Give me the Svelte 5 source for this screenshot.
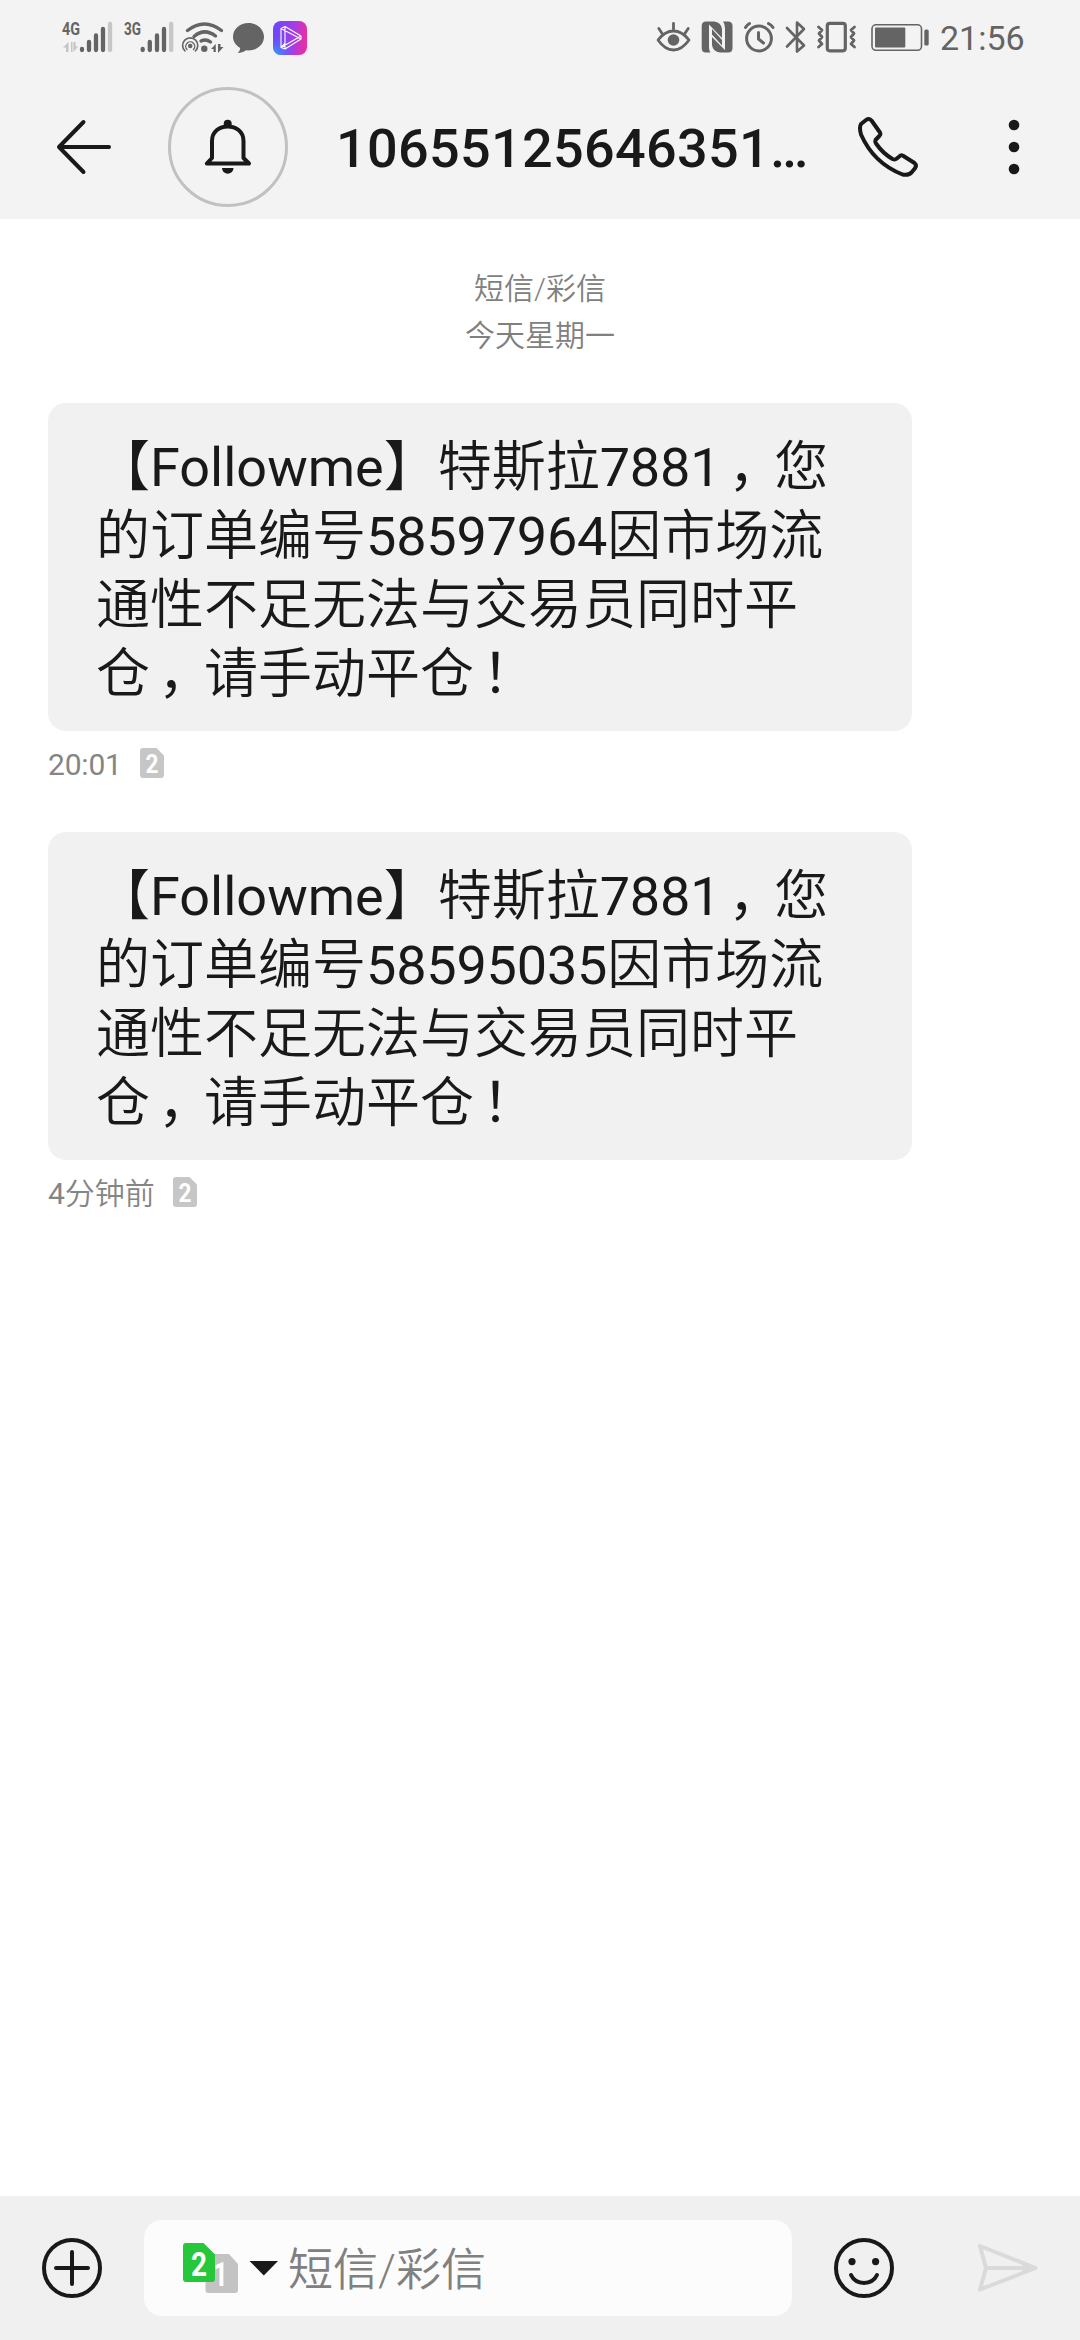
<script>
  const messages = [
    {
      lines: ['【Followme】特斯拉7881\uFF0C您', '的订单编号58597964因市场流', '通性不足无法与交易员同时平', '仓\uFF0C请手动平仓\uFF01'],
      time: '20:01',
    },
    {
      lines: ['【Followme】特斯拉7881\uFF0C您', '的订单编号58595035因市场流', '通性不足无法与交易员同时平', '仓\uFF0C请手动平仓\uFF01'],
      time: '4分钟前',
    },
  ];
  // Splits a line into Chinese, Latin and full-width punctuation runs.
  const split = (line) =>
    line
      .split(/([\uFF0C\uFF01]|[A-Za-z]+|[0-9:]+)/)
      .filter(Boolean)
      .map((text) => ({
        text,
        kind: /[\uFF0C\uFF01]/.test(text) ? 'mark' : /[0-9]/.test(text) ? 'digits' : /[A-Za-z]/.test(text) ? 'latin' : 'han',
      }));
</script>

{#snippet runs(line)}{#each split(line) as run}<span class={run.kind}>{run.text}</span>{/each}{/snippet}

<div class="screen">
  <div class="status">
    <div class="group">
      <svg width="62" height="36" viewBox="62 20 62 36">
        <text class="net" x="62" y="35.2" textLength="18" lengthAdjust="spacingAndGlyphs">4G</text>
        <path d="M68.500 52V42L63 47.500H66V52ZM71 42V52H72.500V42ZM73.500 42V52L78 46.500H75.500V42Z" fill="#c4c4c4" />
        <path d="M82 49v1M89 42v8M96 35.500v14.500M103 29v21" class="bar" />
        <path d="M110 24v26" class="bar off" />
      </svg>
      <svg width="58" height="36" viewBox="124 20 58 36">
        <text class="net" x="124" y="35.2" textLength="17" lengthAdjust="spacingAndGlyphs">3G</text>
        <path d="M142.700 49v1M149.800 42v8M157 35.500v14.500M164 29v21" class="bar" />
        <path d="M171.200 24v26" class="bar off" />
      </svg>
      <svg width="51" height="36" viewBox="182 20 51 36">
        <g fill="none" stroke="#646464" stroke-linecap="round">
          <path d="M187.500 30.500Q204.500 17.500 221.500 30.500M194 36.500Q204.500 27.500 215.500 36M201 41Q206 38.500 210.500 42" stroke-width="3.400" />
          <path d="M185 51a7.600 7.600 0 1 1 10.400 0" stroke-width="1.600" />
          <path d="M187 49.500a4.500 4.500 0 1 1 6.500 0" stroke-width="1.400" />
        </g>
        <circle cx="190.200" cy="46" r="2.300" fill="#646464" />
        <circle cx="204.300" cy="48.700" r="3.200" fill="#646464" />
        <path d="M215.800 52V44L211 49H213.500V52ZM218 44H220.500V47H223.500L218 53Z" fill="#646464" />
      </svg>
      <svg width="40" height="36" viewBox="233 20 40 36">
        <path d="M248.500 23C257 23 264 29 264 36.800S257 50.500 248.500 50.500L246 50.300C243.500 52 240.500 53 237.800 53C239.300 51.500 240 50 240.200 48C235.800 45.500 233 41.500 233 36.800C233 29 240 23 248.500 23Z" fill="#646464" />
      </svg>
      <svg width="34" height="36" viewBox="273 20 34 36">
        <defs>
          <linearGradient id="tile-base" x1="0" y1="0.400" x2="1" y2="0.500">
            <stop offset="0.100" stop-color="#7045fb" />
            <stop offset="0.600" stop-color="#a63de6" />
            <stop offset="1" stop-color="#ee2d9c" />
          </linearGradient>
          <radialGradient id="tile-glow" cx="0.050" cy="1" r="0.600">
            <stop offset="0" stop-color="#28a8ff" />
            <stop offset="1" stop-color="#5a60ff" stop-opacity="0" />
          </radialGradient>
        </defs>
        <rect x="273" y="21" width="34" height="34" rx="8" fill="url(#tile-base)" />
        <rect x="273" y="21" width="34" height="34" rx="8" fill="url(#tile-glow)" />
        <path d="M281 28.500L285 26.500L301 36V39L285 49L281 47.500ZM281 28.500L301 39M281 47.500L301 36M285 26.500V49M281 47.500L285 43" fill="none" stroke="#fff" stroke-width="1.100" stroke-linejoin="round" />
      </svg>
    </div>
    <div class="group">
      <svg width="45" height="36" viewBox="656 20 45 36">
        <path d="M658 40Q665 31 673.500 31T689 40Q682 50 673.500 50T658 40ZM673.500 23.500V30M658.800 28.500L662.500 34M688.200 28.500L684.500 34" class="line" stroke-width="2.800" />
        <circle cx="673.500" cy="40" r="5.800" fill="#646464" />
      </svg>
      <svg width="43" height="36" viewBox="701 20 43 36">
        <path d="M706 21.500H714Q721 22 722 29V38L709 24.500V46Q709 51 710.500 52.500H706Q701.700 52.500 701.700 48V26Q701.700 21.500 706 21.500Z" fill="#646464" />
        <path d="M723 21.500H728Q732.500 21.500 732.500 26V48Q732.500 52.500 728 52.500H720Q713 52 712 45V37L725 50V28Q725 24 723 21.500Z" fill="#646464" />
        <path d="M712 29L722 40V45.500L712 34.500Z" fill="#646464" />
      </svg>
      <svg width="42" height="36" viewBox="744 20 42 36">
        <circle cx="759" cy="38.500" r="12.400" class="line" stroke-width="3" />
        <path d="M745.500 27.500Q747 25 749.500 23.500M768.500 23.500Q771.500 25 773 27.500M758.500 32.500V39L763.500 43" class="line" stroke-width="3" />
      </svg>
      <svg width="31" height="36" viewBox="786 20 31 36">
        <path d="M787 28L804 45.500L797 51.500V22.500L804 29L787 46.500" class="line" stroke-width="2.600" />
      </svg>
      <svg width="55" height="36" viewBox="817 20 55 36">
        <rect x="827.300" y="23.300" width="18" height="27.500" rx="2.500" class="line" stroke-width="3.200" />
        <path d="M818.500 27L822 30L819 33.500L822 37L819 40.500L822 44L818.500 47M854.500 27L851 30L854 33.500L851 37L854 40.500L851 44L854.500 47" class="line" stroke-width="2.800" />
      </svg>
      <svg width="68" height="36" viewBox="872 20 68 36">
        <rect x="872" y="24.800" width="49.500" height="25.500" rx="4" fill="none" stroke="#646464" stroke-width="1.600" />
        <rect x="875" y="27.500" width="30.300" height="20" rx="1" fill="#646464" />
        <rect x="924.300" y="29.500" width="4.400" height="16" rx="1.500" fill="#646464" />
      </svg>
      <span class="clock">21:56</span>
    </div>
  </div>

  <header class="header">
    <svg width="56" height="60" viewBox="56 117 56 60">
      <path d="M109 147H59.500M83.500 122L59 147L83.500 172" class="ink" />
    </svg>
    <div class="avatar">
      <svg width="48" height="60" viewBox="204 117 48 60">
        <path d="M212 158V141C212 121.500 243.500 121.500 243.500 141V158L249 163.500H206.800L212 158Z" class="ink" />
        <circle cx="227.700" cy="123.800" r="4" fill="#191919" />
        <path d="M222 168H233.500C233 175.500 222.500 175.500 222 168Z" fill="#191919" />
      </svg>
    </div>
    <h1>10655125646351…</h1>
    <svg width="62" height="62" viewBox="857 116 62 62">
      <path d="M861 124L866 120Q869 117.800 871.500 120.500L880 132.500Q881 134.500 879.300 136L875.500 140Q874.800 141.500 876 143.500Q883 153.500 892.500 159Q895 160 896.500 158.800L900.500 155.500Q901.500 155 903 155.700L914.500 163Q917 165 915.200 168L911.500 172.500Q908.500 175.500 902.500 174.500Q873.500 163 861 134.500Q859 127 861 124Z" class="ink" />
    </svg>
    <svg class="more" width="12" height="60" viewBox="1008 117 12 60">
      <circle cx="1014" cy="125" r="5.300" /><circle cx="1014" cy="147" r="5.300" /><circle cx="1014" cy="169" r="5.300" />
    </svg>
  </header>

  <main>
    <div class="day">
      <span>短信/彩信</span>
      <span>今天星期一</span>
    </div>
    {#each messages as message}
      <article>
        <div class="bubble">
          {#each message.lines as line}
            <p>{@render runs(line)}</p>
          {/each}
        </div>
        <div class="meta">
          <span>{@render runs(message.time)}</span>
          <svg width="24" height="30" viewBox="0 0 24 30">
            <path d="M3 0H16.500L24 7.500V27Q24 30 21 30H3Q0 30 0 27V3Q0 0 3 0Z" fill="#c6c6c6" />
            <text x="12" y="24.500" class="sim" font-size="26" textLength="13" lengthAdjust="spacingAndGlyphs">2</text>
          </svg>
        </div>
      </article>
    {/each}
  </main>

  <footer>
    <svg width="60" height="60" viewBox="0 0 60 60">
      <circle cx="30" cy="30" r="28" class="ink" />
      <path d="M14 30H46M30 14V46" class="ink" />
    </svg>
    <div class="field">
      <svg width="96" height="52" viewBox="183 2242 96 52">
        <path d="M208.500 2254H229L238 2264V2290Q238 2293 235 2293H208.500Q205.500 2293 205.500 2290V2257Q205.500 2254 208.500 2254Z" fill="#c3c3c3" />
        <text x="220.500" y="2286" class="sim" font-size="34" textLength="15" lengthAdjust="spacingAndGlyphs">1</text>
        <path d="M186 2243H203.500L215 2254.500V2279Q215 2282 212 2282H186Q183 2282 183 2279V2246Q183 2243 186 2243Z" fill="#27c73c" />
        <text x="199" y="2276" class="sim" font-size="33" textLength="16" lengthAdjust="spacingAndGlyphs">2</text>
        <path d="M249.500 2261H278L263.800 2275.500Z" fill="#191919" />
      </svg>
      <span class="hint">短信/彩信</span>
    </div>
    <svg class="smile" width="60" height="60" viewBox="0 0 60 60">
      <circle cx="30" cy="30" r="28" class="ink" />
      <circle cx="18" cy="23.600" r="3.600" fill="#191919" /><circle cx="41.600" cy="23.600" r="3.600" fill="#191919" />
      <path d="M17 37C22 47.500 38 47.500 43 37" class="ink" />
    </svg>
    <svg width="60" height="50" viewBox="978 2243 60 50">
      <path d="M980 2246L1035.500 2268L980 2289.500L986 2268ZM986 2268H1035M1024 2266.500H1031V2269.500H1024Z" fill="none" stroke="#dadada" stroke-width="4" stroke-linejoin="round" />
    </svg>
  </footer>
</div>

<style>
  :global(body) { margin: 0; background: #fff; }
  .screen {
    width: 1080px; height: 2340px; display: flex; flex-direction: column;
    background: #fff; color: #191919;
    font-family: Roboto, "Noto Sans CJK SC", sans-serif;
  }
  svg { display: block; flex: none; overflow: visible; }
  .status {
    height: 75px; flex: none; box-sizing: border-box; padding: 0 57px 0 62px;
    display: flex; justify-content: space-between; align-items: center; background: #f3f3f3;
  }
  .group { display: flex; align-items: center; }
  .clock { width: 83px; font-size: 34px; line-height: 36px; color: #646464; white-space: nowrap; }
  .net { font: 700 18px Roboto, sans-serif; fill: #646464; }
  .bar { fill: none; stroke: #646464; stroke-width: 4.300px; stroke-linecap: round; }
  .off { stroke: #c6c6c6; }
  .line { fill: none; stroke: #646464; stroke-linecap: round; stroke-linejoin: round; }
  .ink { fill: none; stroke: #191919; stroke-width: 4px; stroke-linecap: round; stroke-linejoin: round; }
  .sim { fill: #fff; font-family: Roboto, sans-serif; font-weight: 700; text-anchor: middle; }
  .header {
    height: 144px; flex: none; box-sizing: border-box; padding: 0 60px 0 56px;
    display: flex; align-items: center; background: #f3f3f3;
  }
  .avatar {
    width: 120px; height: 120px; box-sizing: border-box; margin-left: 56px;
    display: flex; align-items: center; justify-content: center;
    border: 3px solid #c1c1c1; border-radius: 50%;
  }
  h1 {
    margin: 4px 0 0 48px; width: 521px; font-size: 54px; line-height: 64px;
    font-weight: 500; letter-spacing: 0.300px; white-space: nowrap;
  }
  .more { margin-left: auto; fill: #191919; }
  main { flex: 1; padding: 46px 48px 0; }
  .day {
    display: flex; flex-direction: column; align-items: center; margin-bottom: 44px;
    font-size: 30px; line-height: 47px; font-weight: 350; color: #808080;
  }
  article { height: 429px; }
  .bubble {
    width: 864px; height: 328px; box-sizing: border-box; padding: 30px 48px 0;
    background: #f1f1f1; border-radius: 18px;
  }
  p { margin: 0; height: 69px; font-size: 54px; line-height: 69px; white-space: nowrap; }
  .han { font-weight: 350; }
  .latin, .digits { font-weight: 400; }
  .digits { letter-spacing: -0.200px; }
  .mark { margin: 0 -8px 0 8px; }
  .meta {
    display: flex; align-items: center; gap: 18px; height: 36px; margin-top: 14px;
    font-size: 30px; line-height: 36px; color: #858585;
  }
  .meta > span { padding-top: 3px; }
  footer {
    height: 144px; flex: none; box-sizing: border-box; padding: 0 42px;
    display: flex; align-items: center; background: #f0f0f0;
  }
  .field {
    width: 648px; height: 96px; box-sizing: border-box; margin: 0 42px; padding-left: 39px;
    display: flex; align-items: center; gap: 9px; background: #fcfcfc; border-radius: 18px;
    font-size: 45px; line-height: 60px; font-weight: 350; color: #808080;
  }
  .hint { padding-top: 5px; }
  .smile { margin-right: 84px; }
</style>
